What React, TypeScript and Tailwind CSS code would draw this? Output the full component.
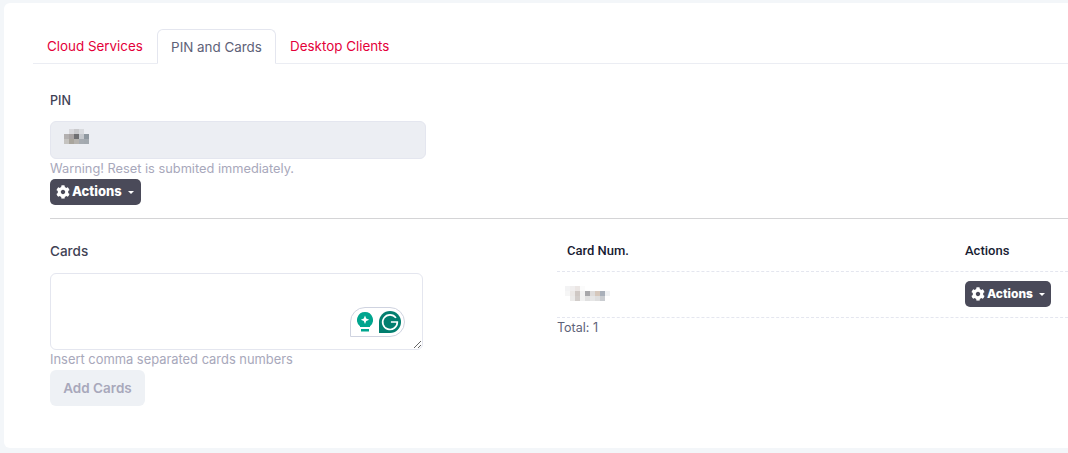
import { FaCog } from 'react-icons/fa';

const sans = { fontFamily: 'Inter' };

function Mosaic({ cells, size }: { cells: string[][]; size: number }) {
  return (
    <svg width={cells[0].length * size} height={cells.length * size} shapeRendering="crispEdges" className="block">
      {cells.map((row, y) =>
        row.map((c, x) => (c ? <rect key={x} x={x * size} y={y * size} width={size} height={size} fill={c} /> : null))
      )}
    </svg>
  );
}

function ActionsButton({ className }: { className: string }) {
  return (
    <button className={`flex items-center rounded-[5px] bg-[#4a4a59] text-white font-['Inter'] font-extrabold ${className}`}>
      <FaCog className="w-[14px] h-[14px] mr-[2px]" />
      <span>Actions</span>
      <span className="ml-[6px] mt-[1px] border-x-[3px] border-t-[3px] border-x-transparent border-t-white" />
    </button>
  );
}

const pinCells = [
  ['#eceef3', '#d8d8dc', '#c9c9cc', '#d8dade', '#eceef3'],
  ['#b3b0b0', '#a8a3a3', '#6f6f72', '#c4c7cc', '#8f98a0'],
  ['#c5c3c0', '#a9a59d', '#b5b2ae', '#a6abb1', '#a3a9af'],
];

const cardCells = [
  ['#f3f3f4', '#f0eeee', '#ebe6e4', '#fbfbfb', '#ffffff', '#ffffff', '#ffffff', '#ffffff', '#ffffff'],
  ['#f6f6f6', '#ebe8e6', '#cfc8c4', '#f2f2f2', '#a7a7aa', '#dedcdb', '#d6c8bc', '#a9b0ba', '#f0f2f4'],
  ['#ffffff', '#ecebea', '#d2cdca', '#f1f1f1', '#e0e0e0', '#e6e6e6', '#dedede', '#c9ccd0', '#ffffff'],
];

export default function App() {
  return (
    <div className="h-[453px] w-[1068px] overflow-hidden bg-[#f3f6f9] pl-[4px] pt-[3px]" style={sans}>
      <div className="h-[445px] w-[1100px] rounded-[6px] bg-white pl-[29px] pt-[26px]">
        {/* Tabs */}
        <div className="flex h-[35px] border-b border-[#ebedf3] text-[13.4px] text-[#e4003a]">
          <div className="w-[124px] pl-[14px] pt-[7px]">Cloud Services</div>
          <div className="-mb-px h-[35px] w-[119px] rounded-t-[6px] border border-b-white border-[#e4e6ef] bg-white pt-[7px] text-center text-[#5e6278]">
            PIN and Cards
          </div>
          <div className="pl-[14px] pt-[7px]">Desktop Clients</div>
        </div>

        <div className="pl-[17px]">
          {/* PIN */}
          <div className="mt-[30px] h-[14px] text-[12.5px] font-medium leading-[14px] text-[#3f4254]">PIN</div>
          <div className="mt-[13px] flex h-[38px] w-[376px] items-center rounded-[6px] border border-[#e4e6ef] bg-[#eceef3] pb-[7px] pl-[13px]">
            <Mosaic cells={pinCells} size={5} />
          </div>
          <div className="mt-px h-[18px] text-[12.8px] leading-[18px] text-[#a8a8bb]">Warning! Reset is submited immediately.</div>
          <ActionsButton className="mt-px h-[26px] w-[91px] pl-[6px] text-[13px]" />
          <div className="mt-[13px] border-t border-[#d4d4d6]" />

          {/* Cards */}
          <div className="flex">
            <div className="w-[507px]">
              <div className="mt-[24px] h-[16px] text-[13.5px] font-medium leading-[16px] text-[#3f4254]">Cards</div>
              <div className="relative mt-[14px] h-[77px] w-[373px]">
                <textarea className="block h-[77px] w-[373px] rounded-[6px] border border-[#e4e6ef] bg-white outline-none" />
                <div className="absolute left-[300px] top-[34px] flex h-[30px] w-[55px] items-center rounded-[15px] rounded-bl-none border border-[#cfd3e0] bg-white pl-[6px]">
                  <svg width="16" height="20" viewBox="0 0 16 20" className="block">
                    <path d="M8 0a8 8 0 0 1 5 14.2V15H3v-.8A8 8 0 0 1 8 0z" fill="#00a58e" />
                    <path d="M8 3.5l1.2 3 3 1.2-3 1.2-1.2 3-1.2-3-3-1.2 3-1.2z" fill="#fff" />
                    <rect x="4" y="17" width="8" height="2.5" fill="#00a58e" />
                  </svg>
                  <svg width="22" height="22" viewBox="0 0 24 24" className="ml-[6px] block">
                    <path d="M12 0a12 12 0 0 1 0 24H0V12A12 12 0 0 1 12 0z" fill="#027e6f" />
                    <path d="M18.5 7.5A8 8 0 1 0 20 12h-7" fill="none" stroke="#fff" strokeWidth="1.8" />
                  </svg>
                </div>
              </div>
              <div className="mt-px h-[18px] text-[12.9px] leading-[18px] text-[#a8a8bb]">Insert comma separated cards numbers</div>
              <button className="mt-px h-[36px] w-[95px] rounded-[6px] bg-[#eef1f5] text-[13.5px] font-semibold text-[#a8a8bb]">Add Cards</button>
            </div>

            {/* Table */}
            <div className="w-[536px] font-['Roboto']">
              <div className="flex h-[53px] border-b border-dashed border-[#e4e6ef] pb-[11px] text-[13px] font-medium text-[#181c32]">
                <div className="flex w-[408px] items-end pl-[10px]">Card Num.</div>
                <div className="flex items-end">Actions</div>
              </div>
              <div className="flex h-[46px] items-center border-b border-dashed border-[#e4e6ef] pb-[2px]">
                <div className="w-[408px] pl-[8px]">
                  <Mosaic cells={cardCells} size={5} />
                </div>
                <ActionsButton className="h-[26px] w-[86px] pl-[6px] pt-px text-[12px]" />
              </div>
              <div className="mt-[2px] font-['Inter'] text-[12.5px] leading-[16px] text-[#5e6278]">Total: 1</div>
            </div>
          </div>
        </div>
      </div>
    </div>
  );
}
